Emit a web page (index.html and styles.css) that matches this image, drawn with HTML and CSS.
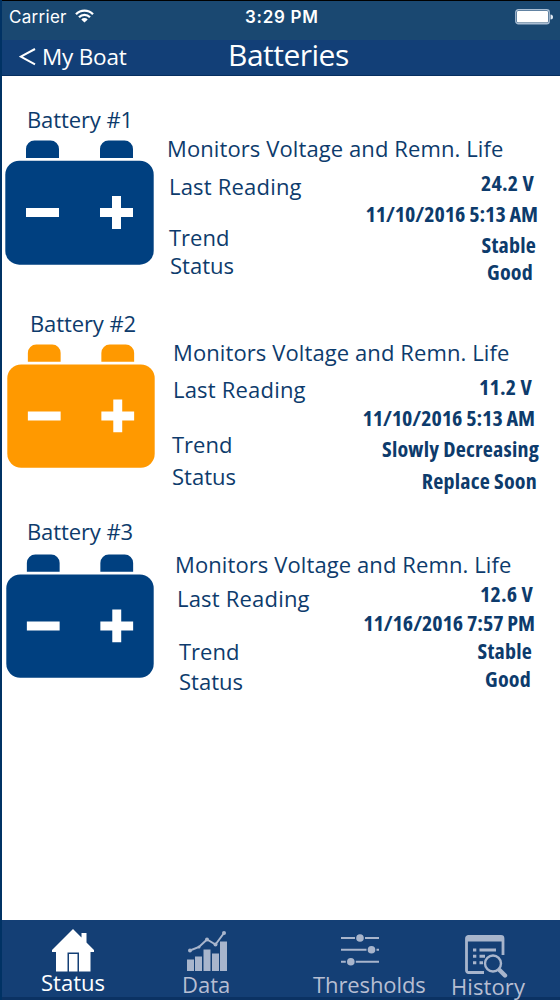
FILE: index.html
```
<!DOCTYPE html>
<html lang="en">
<head>
<meta charset="utf-8">
<title>Batteries</title>
<link rel="stylesheet" href="styles.css">
</head>
<body>
<svg class="defs" width="0" height="0" aria-hidden="true">
  <symbol id="battery" viewBox="0 0 149 125" preserveAspectRatio="none">
    <path fill="currentColor" d="M21 18V9a8.500 8.500 0 0 1 8.500-8.500h16A8.500 8.500 0 0 1 54 9v9zM95 18V9a8.500 8.500 0 0 1 8.500-8.500h16A8.500 8.500 0 0 1 128 9v9z"/>
    <rect x="0.300" y="20.700" width="148.400" height="104" rx="14" fill="currentColor"/>
    <path fill="#fff" d="M21 68h33v9H21zM95 68h12V56h9v12h12v9h-12v12h-9V77H95z"/>
  </symbol>
</svg>
<div class="screen">
  <header class="top">
    <div class="statusbar">
      <span class="carrier">Carrier</span>
      <svg class="wifi" width="19" height="14" viewBox="0 0 19 14" fill="none" stroke="#fff" stroke-width="2.300">
        <path d="M1 5.200a12 12 0 0 1 17 0M4 8.200a7.800 7.800 0 0 1 11 0"/>
        <path fill="#fff" stroke="none" d="M9.500 13.600L6.300 10.400a4.500 4.500 0 0 1 6.400 0z"/>
      </svg>
      <span class="clock">3:29 PM</span>
      <svg class="charge" width="38" height="16" viewBox="0 0 38 16">
        <rect x="0.800" y="0.800" width="33.400" height="14" rx="2.500" fill="#1a4871" stroke="#a9bdd3" stroke-width="1.400"/>
        <rect x="2" y="2" width="31" height="11.600" rx="1" fill="#fff"/>
        <path d="M35.500 5.500a2.500 2.500 0 0 1 0 5z" fill="#dfe8f2"/>
      </svg>
    </div>
    <div class="navbar">
      <a class="back"><svg width="17" height="18" viewBox="0 0 17 18" fill="none" stroke="#fff" stroke-width="2"><path d="M16 1L1.800 8.700L16 16.400"/></svg><span>My Boat</span></a>
      <h1>Batteries</h1>
    </div>
  </header>

  <main>
    <section class="battery first">
      <div class="unit"><h2>Battery #1</h2><svg class="icon"><use href="#battery"/></svg></div>
      <div class="details">
        <p class="summary">Monitors Voltage and Remn. Life</p>
        <div class="readings">
          <div class="labels"><span>Last Reading</span><span>Trend</span><span>Status</span></div>
          <div class="values"><span>24.2 V</span><span class="date">11/10/2016 5:13 AM</span><span>Stable</span><span>Good</span></div>
        </div>
      </div>
    </section>
    <section class="battery second">
      <div class="unit"><h2>Battery #2</h2><svg class="icon"><use href="#battery"/></svg></div>
      <div class="details">
        <p class="summary">Monitors Voltage and Remn. Life</p>
        <div class="readings">
          <div class="labels"><span>Last Reading</span><span>Trend</span><span>Status</span></div>
          <div class="values"><span>11.2 V</span><span class="date">11/10/2016 5:13 AM</span><span>Slowly Decreasing</span><span>Replace Soon</span></div>
        </div>
      </div>
    </section>
    <section class="battery third">
      <div class="unit"><h2>Battery #3</h2><svg class="icon"><use href="#battery"/></svg></div>
      <div class="details">
        <p class="summary">Monitors Voltage and Remn. Life</p>
        <div class="readings">
          <div class="labels"><span>Last Reading</span><span>Trend</span><span>Status</span></div>
          <div class="values"><span>12.6 V</span><span class="date">11/16/2016 7:57 PM</span><span>Stable</span><span>Good</span></div>
        </div>
      </div>
    </section>
  </main>

  <nav class="tabs">
    <a class="tab status active">
      <svg width="42" height="43" viewBox="0 0 42 43"><path fill="#fff" d="M21 0l8.500 8.500V4h5v9.500L42 21v2h-3.500v19.500H27V23.500H15.500v19H4V23H0v-2z"/><path fill="#fff" d="M17 25h8.500v17.500H17z"/></svg>
      <span>Status</span>
    </a>
    <a class="tab data">
      <svg width="41" height="41" viewBox="0 0 41 41" fill="currentColor"><path d="M0 28.500h7V40H0zM8 25.500h7V40H8zM16.500 18.500h7V40h-7zM25 22.500h7V40h-7zM33 10.500h7V40h-7z"/><path d="M3 19.500l9-3.500 8-7.500 8.500 5L37 2" fill="none" stroke="currentColor" stroke-width="2"/><circle cx="3" cy="19.500" r="2"/><circle cx="12" cy="16" r="1.500"/><circle cx="20" cy="8.500" r="2"/><circle cx="28.500" cy="13.500" r="2"/><circle cx="37" cy="2" r="2"/></svg>
      <span>Data</span>
    </a>
    <a class="tab thresholds">
      <svg width="38" height="32" viewBox="0 0 38 32" fill="currentColor"><path d="M0 4h14M24 4h14M0 15.700h25.500M35.500 15.700h2.500M0 27.700h4.800M14.800 27.700H38" stroke="currentColor" stroke-width="1.900"/><circle cx="19" cy="4" r="3.800"/><circle cx="30.500" cy="15.700" r="3.800"/><circle cx="9.800" cy="27.700" r="3.800"/></svg>
      <span>Thresholds</span>
    </a>
    <a class="tab history">
      <svg width="43" height="43" viewBox="0 0 43 43" fill="none" stroke="currentColor"><path d="M19 37.500H3.500a2 2 0 0 1-2-2V3.500a2 2 0 0 1 2-2H36a2 2 0 0 1 2 2V20" stroke-width="2.800"/><path d="M2 4h36" stroke-width="5"/><path d="M8 15h3.300M8 21.300h3.300M8 27.700h3.300M14.500 15h16.500M14.500 21.300h5.500M14.500 27.700h3.500" stroke-width="2.900"/><circle cx="28" cy="28.500" r="8" stroke-width="2.400"/><path d="M34.500 35l5.500 5.500" stroke-width="4.400" stroke-linecap="round"/></svg>
      <span>History</span>
    </a>
  </nav>
</div>
</body>
</html>
```
FILE: styles.css
```
* { box-sizing: border-box; }
body { margin: 0; background: #fff; font-family: "Open Sans", "Noto Sans", sans-serif; font-size: 22px; line-height: 24px; }
h1, h2, p { margin: 0; font-weight: 400; font-size: inherit; }
.defs { display: block; position: absolute; }
.screen { width: 560px; height: 1000px; display: flex; flex-direction: column; color: #0d3b6c; white-space: nowrap; overflow: hidden; border-left: 2px solid #003264; }
svg { display: block; flex: none; }

.top { height: 76px; flex: none; margin-left: -2px; background: #123f77; border-top: 1px solid #000; border-bottom: 1px solid #062f60; color: #fff; }
.statusbar { height: 39px; display: flex; align-items: flex-start; padding: 4px 7px 0 9px; background: #1a4871; font-family: Inter, sans-serif; font-size: 17px; }
.carrier { width: 58px; letter-spacing: 0.3px; }
.wifi { margin: 4px 0 0 8px; }
.clock { margin-left: 151px; font-weight: 600; letter-spacing: 0.7px; }
.charge { margin: 4px 0 0 auto; }
.navbar { height: 35px; display: flex; align-items: flex-start; }
.back { display: flex; padding: 5px 0 0 19px; width: 228px; font-size: 22.500px; letter-spacing: -0.2px; }
.back svg { margin-top: 3px; }
.back span { margin-left: 6px; }
.navbar h1 { font-size: 30px; line-height: 30px; letter-spacing: -0.5px; }

main { flex: 1; background: #fff; }
.battery { display: flex; }
.first { height: 204px; }
.second { height: 208px; }
.unit { flex: none; width: 165px; padding-top: 31px; }
.unit h2 { letter-spacing: -0.1px; }
.details { flex: 1; }
.readings { display: flex; justify-content: space-between; }
.labels, .values { display: flex; flex-direction: column; }
.values { align-items: flex-end; font-weight: 700; font-stretch: 77%; letter-spacing: 0.2px; }
.summary { letter-spacing: 0.1px; }
.labels span:first-child { letter-spacing: 0.2px; }
.values .date { letter-spacing: -0.05px; }
.icon { color: #004080; width: 149px; height: 125px; }

.first h2 { margin-left: 25px; }
.first .icon { margin: 9px 0 0 3px; }
.first .details { padding-top: 60px; }
.first .labels { padding-top: 14px; }
.first .labels span:nth-child(1) { margin-left: 2px; }
.first .labels span:nth-child(2) { margin: 27px 0 0 2px; }
.first .labels span:nth-child(3) { margin: 4px 0 0 3px; }
.first .values { padding-top: 10px; }
.first .values span:nth-child(1) { margin-right: 26px; }
.first .values span:nth-child(2) { margin: 7px 22px 0 0; }
.first .values span:nth-child(3) { margin: 7px 24px 0 0; }
.first .values span:nth-child(4) { margin: 3px 27px 0 0; }

.second h2 { margin-left: 28px; }
.second .icon { margin: 9px 0 0 5px; color: #ff9900; width: 148px; height: 124px; }
.second .details { padding: 60px 0 0 6px; }
.second .labels { padding-top: 13px; }
.second .labels span:nth-child(1) { margin-left: 0; }
.second .labels span:nth-child(2) { margin: 31px 0 0 -1px; }
.second .labels span:nth-child(3) { margin: 8px 0 0 -1px; }
.second .values { padding-top: 10px; }
.second .values span:nth-child(1) { margin-right: 28px; }
.second .values span:nth-child(2) { margin: 7px 25px 0 0; }
.second .values span:nth-child(3) { margin: 7px 21px 0 0; }
.second .values span:nth-child(4) { margin: 8px 23px 0 0; }

.third h2 { margin-left: 25px; }
.third .icon { margin: 11px 0 0 4px; width: 148px; height: 124px; }
.third .details { padding: 64px 0 0 8px; }
.third .labels { padding-top: 10px; }
.third .labels span:nth-child(1) { margin-left: 2px; }
.third .labels span:nth-child(2) { margin: 29px 0 0 4px; }
.third .labels span:nth-child(3) { margin: 6px 0 0 4px; }
.third .values { padding-top: 5px; }
.third .values span:nth-child(1) { margin-right: 27px; }
.third .values span:nth-child(2) { margin: 5px 25px 0 0; }
.third .values span:nth-child(3) { margin: 4px 28px 0 0; }
.third .values span:nth-child(4) { margin: 4px 29px 0 0; }

.tabs { height: 80px; flex: none; display: flex; background: #143f75; border-bottom: 3px solid #0b3263; color: #a8b5cc; }
.tab { display: flex; flex-direction: column; }
.tab span { color: #b7bed2; }
.tab.active span { color: #fff; }
.status { width: 140px; padding: 9px 0 0 39px; }
.status svg { margin-left: 11px; }
.status span { margin-top: -2px; }
.data { width: 171px; padding: 11px 0 0 40px; }
.data svg { margin-left: 5px; }
.thresholds { width: 138px; padding: 14px 0 0; }
.thresholds svg { margin-left: 28px; }
.thresholds span { margin-top: 6px; letter-spacing: -0.1px; }
.history { padding-top: 15px; }
.history svg { margin-left: 14px; }
.history span { margin-top: -4px; letter-spacing: 0.1px; }
```
